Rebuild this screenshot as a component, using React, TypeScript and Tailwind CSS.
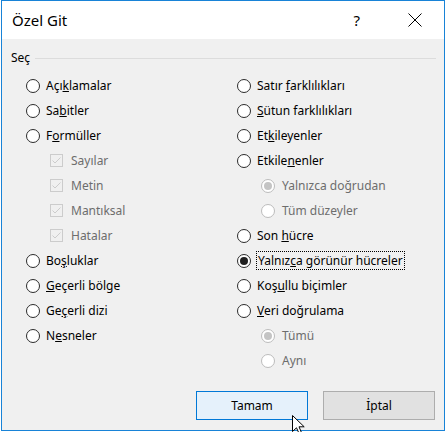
import React from "react";

const FONT = "font-['Segoe_UI','Noto_Sans','Open_Sans',sans-serif]";

function Radio({ checked = false, disabled = false }: { checked?: boolean; disabled?: boolean }) {
  return (
    <span
      className={`relative flex h-[14px] w-[14px] shrink-0 items-center justify-center rounded-full border bg-white ${
        disabled ? "border-[#bcbcbc]" : "border-[#2b2b2b]"
      }`}
    >
      {checked && (
        <span className={`h-[8px] w-[8px] rounded-full ${disabled ? "bg-[#c4c4c4]" : "bg-[#1f1f1f]"}`} />
      )}
    </span>
  );
}

function Check() {
  return (
    <span className="flex h-[13px] w-[13px] shrink-0 items-center justify-center border border-[#cccccc] bg-[#f0f0f0]">
      <svg width="11" height="11" viewBox="0 0 11 11">
        <path d="M1.5 5.5 L4 8 L9.5 2.5" fill="none" stroke="#cccccc" strokeWidth="1" />
      </svg>
    </span>
  );
}

function Row({ children }: { children: React.ReactNode }) {
  return <div className="flex h-[25px] items-center">{children}</div>;
}

function RadioRow({ label, checked, focus }: { label: React.ReactNode; checked?: boolean; focus?: boolean }) {
  return (
    <Row>
      <Radio checked={checked} />
      {focus ? (
        <span className="ml-[5px] border border-dotted border-black px-px leading-[17px] text-black">{label}</span>
      ) : (
        <span className="ml-[6px] text-black">{label}</span>
      )}
    </Row>
  );
}

function SubRadioRow({ label, checked }: { label: string; checked?: boolean }) {
  return (
    <Row>
      <span className="ml-[24px]" />
      <Radio checked={checked} disabled />
      <span className="ml-[7px] text-[#6d6d6d]">{label}</span>
    </Row>
  );
}

function CheckRow({ label }: { label: string }) {
  return (
    <Row>
      <span className="ml-[24px]" />
      <Check />
      <span className="ml-[8px] text-[#6d6d6d]">{label}</span>
    </Row>
  );
}

export default function App() {
  return (
    <div className={`relative h-[432px] w-[446px] bg-white ${FONT}`}>
      <div className="ml-px flex h-[431px] w-[444px] flex-col border border-[#1883d7]">
        <div className="flex h-[38px] items-center bg-white">
          <span className="ml-[10px] text-[15px] text-black">Özel Git</span>
          <span className="ml-auto text-[15px] text-black">?</span>
          <svg className="ml-[48px] mr-[22px]" width="14" height="14" viewBox="0 0 14 14">
            <path d="M0.5 0.5 L13.5 13.5 M13.5 0.5 L0.5 13.5" stroke="#000" strokeWidth="1" />
          </svg>
        </div>
        <div className="flex flex-1 flex-col bg-[#f0f0f0] text-[12px] leading-[16px]">
          <div className="mt-[11px] ml-[9px] mr-[8px] flex items-center">
            <span className="text-black">Seç</span>
            <span className="ml-[5px] h-px flex-1 bg-[#dcdcdc]" />
          </div>
          <div className="mt-[7px] ml-[24px] flex">
            <div className="flex w-[211px] flex-col">
              <RadioRow label={<>Açı<u>k</u>lamalar</>} />
              <RadioRow label={<>Sa<u>b</u>itler</>} />
              <RadioRow label={<>F<u>o</u>rmüller</>} />
              <CheckRow label="Sayılar" />
              <CheckRow label="Metin" />
              <CheckRow label="Mantıksal" />
              <CheckRow label="Hatalar" />
              <RadioRow label={<>Bo<u>ş</u>luklar</>} />
              <RadioRow label={<><u>G</u>eçerli bölge</>} />
              <RadioRow label={<>Ge<u>ç</u>erli dizi</>} />
              <RadioRow label={<>N<u>e</u>sneler</>} />
            </div>
            <div className="flex flex-col">
              <RadioRow label={<>Satır <u>f</u>arklılıkları</>} />
              <RadioRow label={<><u>S</u>ütun farklılıkları</>} />
              <RadioRow label={<>Et<u>k</u>ileyenler</>} />
              <RadioRow label={<>Etkile<u>n</u>enler</>} />
              <SubRadioRow label="Yalnızca doğrudan" checked />
              <SubRadioRow label="Tüm düzeyler" />
              <RadioRow label={<>Son <u>h</u>ücre</>} />
              <RadioRow label={<>Yalnız<u>c</u>a görünür hücreler</>} checked focus />
              <RadioRow label={<>Koş<u>u</u>llu biçimler</>} />
              <RadioRow label={<><u>V</u>eri doğrulama</>} />
              <SubRadioRow label="Tümü" checked />
              <SubRadioRow label="Aynı" />
            </div>
          </div>
          <div className="mt-[18px] mr-[9px] flex justify-end gap-[15px]">
            <button className="h-[29px] w-[112px] border border-[#0078d7] bg-[#e5f1fb] text-black">Tamam</button>
            <button className="h-[29px] w-[112px] border border-[#adadad] bg-[#e1e1e1] text-black">İptal</button>
          </div>
        </div>
      </div>
      <svg className="absolute left-[292px] top-[415px]" width="14" height="20" viewBox="0 0 14 20">
        <path d="M0.5 0.5 L0.5 16.5 L4.5 12.8 L7.2 18.8 L9.6 17.8 L7 11.8 L12.2 11.8 Z" fill="#fff" stroke="#000" strokeWidth="1" strokeLinejoin="miter" />
      </svg>
    </div>
  );
}
